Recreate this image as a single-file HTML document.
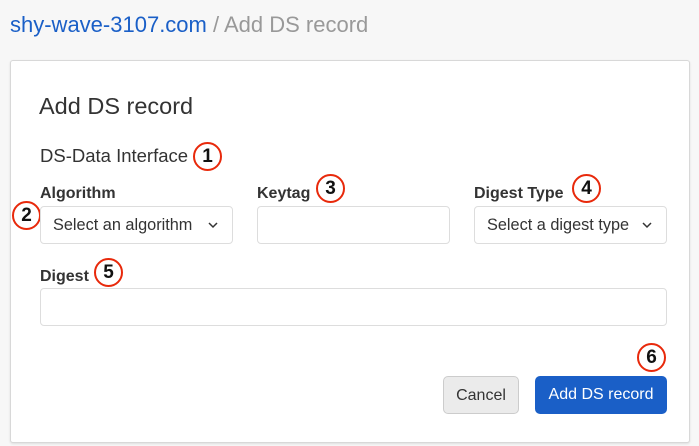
<!DOCTYPE html>
<html><head><style>
body{margin:0;width:699px;height:446px;background:#f7f7f7;font-family:"Liberation Sans",Helvetica,Arial,sans-serif;position:relative;overflow:hidden;color:#333}
.a{position:absolute}
.crumb{left:10px;top:12px;font-size:22px;color:#999;white-space:nowrap}
.crumb b{font-weight:normal;color:#1a5fc7}
.card{left:10px;top:60px;width:678px;height:381px;background:#fff;border:1px solid #d8d8d8;border-radius:3px;box-shadow:0 1px 2px rgba(0,0,0,.1)}
h1{position:absolute;left:39px;top:93px;margin:0;font-size:23.5px;font-weight:normal;color:#333}
.lbl{font-size:16px;font-weight:bold;color:#333}
.inp{border:1px solid #ddd;border-radius:4px;background:#fff;box-sizing:border-box}
.sel{font-size:16.3px;color:#333;padding-left:12px;line-height:36px;white-space:nowrap}
.sel svg{position:absolute;right:14px;top:15px}
.c{width:29px;height:29px;border:2px solid #e8290b;border-radius:50%;box-sizing:border-box;text-align:center;line-height:26px;font-size:19px;font-weight:bold;color:#111;background:#fff}
.btn{border-radius:5px;font-size:16px;text-align:center;line-height:37px;box-sizing:border-box}
</style></head><body>
<div class="a crumb"><b>shy-wave-3107.com</b> / Add DS record</div>
<div class="a card"></div>
<h1>Add DS record</h1>
<div class="a" style="left:40px;top:145px;font-size:18.5px;color:#333;white-space:nowrap">DS-Data Interface</div>
<div class="a c" style="left:193px;top:142px">1</div>
<div class="a lbl" style="left:40px;top:185px">Algorithm</div>
<div class="a c" style="left:12px;top:201px">2</div>
<div class="a inp sel" style="left:40px;top:206px;width:193px;height:38px">Select an algorithm<svg width="10" height="7" viewBox="0 0 10 7"><path d="M1 1l4 4 4-4" stroke="#333" stroke-width="1.5" fill="none"/></svg></div>
<div class="a lbl" style="left:257px;top:185px">Keytag</div>
<div class="a c" style="left:316px;top:174px">3</div>
<div class="a inp" style="left:257px;top:206px;width:193px;height:38px"></div>
<div class="a lbl" style="left:474px;top:185px">Digest Type</div>
<div class="a c" style="left:572px;top:174px">4</div>
<div class="a inp sel" style="left:474px;top:206px;width:193px;height:38px">Select a digest type<svg width="10" height="7" viewBox="0 0 10 7"><path d="M1 1l4 4 4-4" stroke="#333" stroke-width="1.5" fill="none"/></svg></div>
<div class="a lbl" style="left:40px;top:268px">Digest</div>
<div class="a c" style="left:94px;top:258px">5</div>
<div class="a inp" style="left:40px;top:288px;width:627px;height:38px"></div>
<div class="a c" style="left:637px;top:343px">6</div>
<div class="a btn" style="left:443px;top:376px;width:76px;height:38px;background:#ebebeb;border:1px solid #ccc;color:#333">Cancel</div>
<div class="a btn" style="left:535px;top:376px;width:132px;height:38px;background:#1a5fc7;color:#fff">Add DS record</div>
</body></html>
